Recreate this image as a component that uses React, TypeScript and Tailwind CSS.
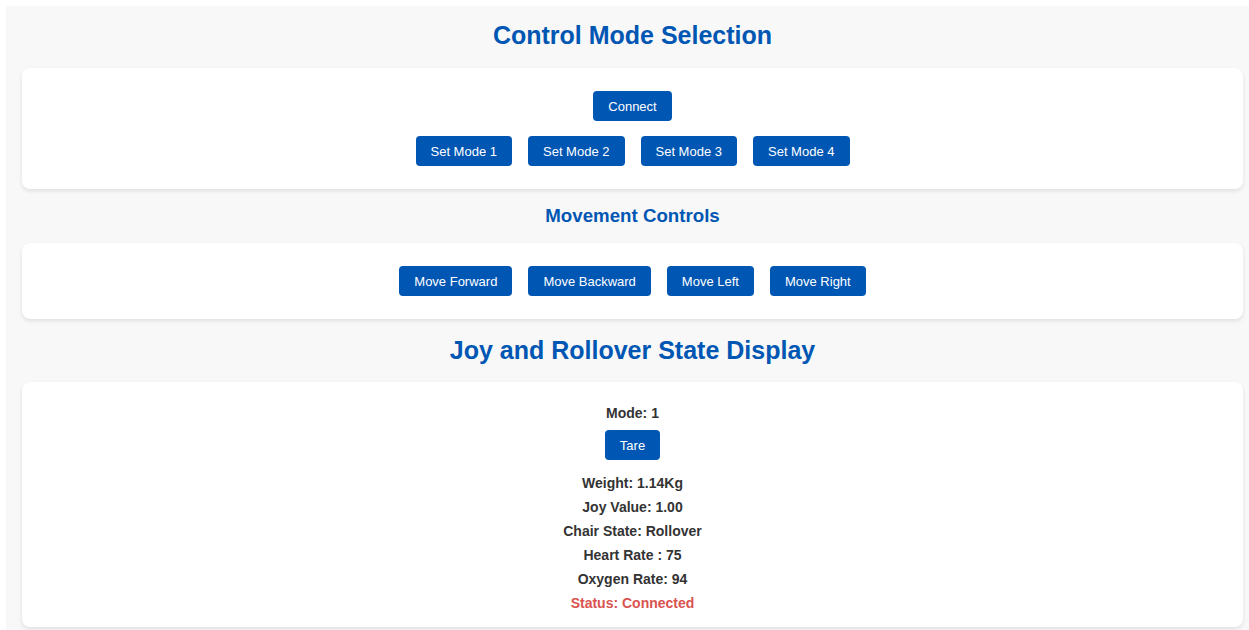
import React from "react";

const font = { fontFamily: '"Liberation Sans", Arial, sans-serif' };

function Btn({ children }: { children: React.ReactNode }) {
  return (
    <button className="h-[30px] px-[15px] mx-[8px] rounded-[4px] bg-[#0056b3] text-white text-[13px] leading-[15px]">
      {children}
    </button>
  );
}

function Card({ className, children }: { className?: string; children: React.ReactNode }) {
  return (
    <div className={"bg-white rounded-[8px] shadow-[0_2px_4px_rgba(0,0,0,0.1)] " + (className ?? "")}>
      {children}
    </div>
  );
}

export default function App() {
  const readings = [
    "Weight: 1.14Kg",
    "Joy Value: 1.00",
    "Chair State: Rollover",
    "Heart Rate : 75",
    "Oxygen Rate: 94",
  ];
  return (
    <div className="min-h-[630px] bg-white pt-[6px] pl-[6px]" style={font}>
      <div className="bg-[#f8f8f8] pl-[16px] pr-[6px] pb-[20px] min-h-[624px]">
        <h1 className="pt-[15px] text-center text-[25px] leading-[28px] font-bold text-[#0056b3]">
          Control Mode Selection
        </h1>
        <Card className="mt-[19px] pt-[23px] pb-[23px] flex flex-col items-center gap-[15px]">
          <div className="flex justify-center">
            <Btn>Connect</Btn>
          </div>
          <div className="flex justify-center">
            <Btn>Set Mode 1</Btn>
            <Btn>Set Mode 2</Btn>
            <Btn>Set Mode 3</Btn>
            <Btn>Set Mode 4</Btn>
          </div>
        </Card>

        <h2 className="mt-[16px] text-center text-[18.7px] leading-[22px] font-bold text-[#0056b3]">
          Movement Controls
        </h2>
        <Card className="mt-[16px] py-[23px] flex justify-center">
          <Btn>Move Forward</Btn>
          <Btn>Move Backward</Btn>
          <Btn>Move Left</Btn>
          <Btn>Move Right</Btn>
        </Card>

        <h1 className="mt-[17px] text-center text-[25px] leading-[28px] font-bold text-[#0056b3]">
          Joy and Rollover State Display
        </h1>
        <Card className="mt-[18px] pt-[23px] pb-[12px] flex flex-col items-center">
          <p className="text-[14px] leading-[16px] font-bold text-[#333]">Mode: 1</p>
          <div className="mt-[9px] mb-[11px]">
            <Btn>Tare</Btn>
          </div>
          {readings.map((r) => (
            <p key={r} className="text-[14px] leading-[24px] font-bold text-[#333]">
              {r}
            </p>
          ))}
          <p className="text-[14px] leading-[24px] font-bold text-[#d9534f]">Status: Connected</p>
        </Card>
      </div>
    </div>
  );
}
